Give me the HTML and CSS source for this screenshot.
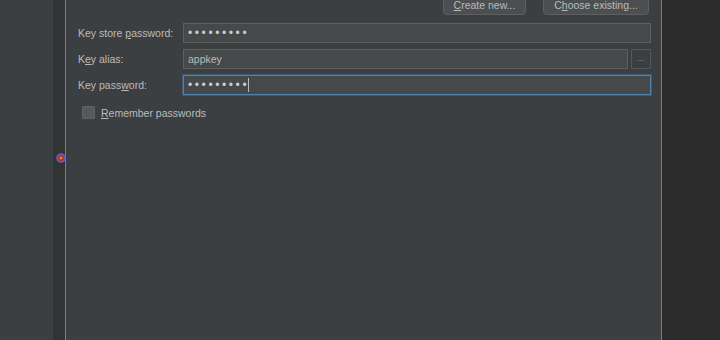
FILE: index.html
```html
<!DOCTYPE html>
<html lang="en">
<head>
    <meta charset="UTF-8">
    <title>Generate Signed APK</title>
    <link rel="stylesheet" href="styles.css">
</head>
<body>
    <div class="side-panel"></div>
    <div class="side-strip">
        <svg class="strip-icon" width="10" height="12" viewBox="0 0 10 12">
            <circle cx="5" cy="6" r="4" fill="#b0362f" stroke="#5b5fd6" stroke-width="1.6"/>
            <circle cx="5" cy="6" r="1.4" fill="#e0862f"/>
        </svg>
    </div>

    <div class="dialog">
        <div class="button-row">
            <div class="btn btn-create"><u>C</u>reate new...</div>
            <div class="btn btn-choose">C<u>h</u>oose existing...</div>
        </div>

        <div class="form-grid">
            <label>Key store <u>p</u>assword:</label>
            <div class="field"><span class="dots">•••••••••</span></div>

            <label>K<u>e</u>y alias:</label>
            <div class="field-with-btn">
                <div class="field">appkey</div>
                <div class="browse-btn">...</div>
            </div>

            <label>Key pass<u>w</u>ord:</label>
            <div class="field focused"><span class="dots">•••••••••</span><span class="caret"></span></div>
        </div>

        <div class="check-row">
            <span class="checkbox"></span>
            <span><u>R</u>emember passwords</span>
        </div>
    </div>

    <div class="outer-right"></div>
</body>
</html>
```

FILE: styles.css
```css
* { box-sizing: border-box; }
body {
    margin: 0;
    display: flex;
    height: 340px;
    overflow: hidden;
    background-color: #2b2b2b;
    font-family: "Liberation Sans", Arial, sans-serif;
    font-size: 10.5px;
    color: #bbbbbb;
}
u { text-decoration-thickness: 1px; text-underline-offset: 1px; }

.side-panel { width: 53px; flex: none; background-color: #3c3f41; }
.side-strip { width: 12px; flex: none; background-color: #313335; position: relative; }
.strip-icon { position: absolute; left: 3px; top: 152px; }

.dialog {
    width: 597px;
    flex: none;
    border-left: 1px solid #4b8ac9;
    border-right: 1px solid #4b8ac9;
    background-color: #3c3f41;
    padding: 0 10px 0 12px;
}

.button-row {
    display: flex;
    justify-content: flex-end;
    gap: 17px;
    margin-top: -6px;
    padding-right: 2px;
}
.btn {
    height: 21px;
    line-height: 20px;
    border: 1px solid #5e6060;
    border-radius: 4px;
    background-color: #4b4f51;
    color: #bbbbbb;
    text-align: center;
    white-space: nowrap;
}
.btn-create { width: 83px; }
.btn-choose { width: 106px; }

.form-grid {
    display: grid;
    grid-template-columns: 105px 1fr;
    row-gap: 6px;
    margin-top: 8px;
    align-items: center;
}
.form-grid label { line-height: 20px; white-space: nowrap; }

.field {
    height: 20px;
    padding: 0 4px;
    border: 1px solid #5e6060;
    background-color: #45494a;
    display: flex;
    align-items: center;
}
.field.focused {
    border-color: #4f80b2;
    box-shadow: 0 0 0 1px #3a5a7c;
}
.dots { font-size: 12px; letter-spacing: 2.6px; color: #cccccc; }
.caret { width: 1px; height: 14px; background-color: #bbbbbb; margin-left: -1px; }

.field-with-btn { display: flex; gap: 3px; }
.field-with-btn .field { flex: 1; }
.browse-btn {
    width: 20px;
    height: 20px;
    line-height: 16px;
    border: 1px solid #545759;
    text-align: center;
    color: #888888;
    font-size: 9px;
}

.check-row {
    display: flex;
    align-items: center;
    gap: 6px;
    margin-top: 11px;
    padding-left: 4px;
}
.checkbox {
    width: 13px;
    height: 13px;
    border: 1px solid #5f6263;
    background-color: #55595b;
    border-radius: 1px;
}

.outer-right { flex: 1; background-color: #2b2b2b; }
```
